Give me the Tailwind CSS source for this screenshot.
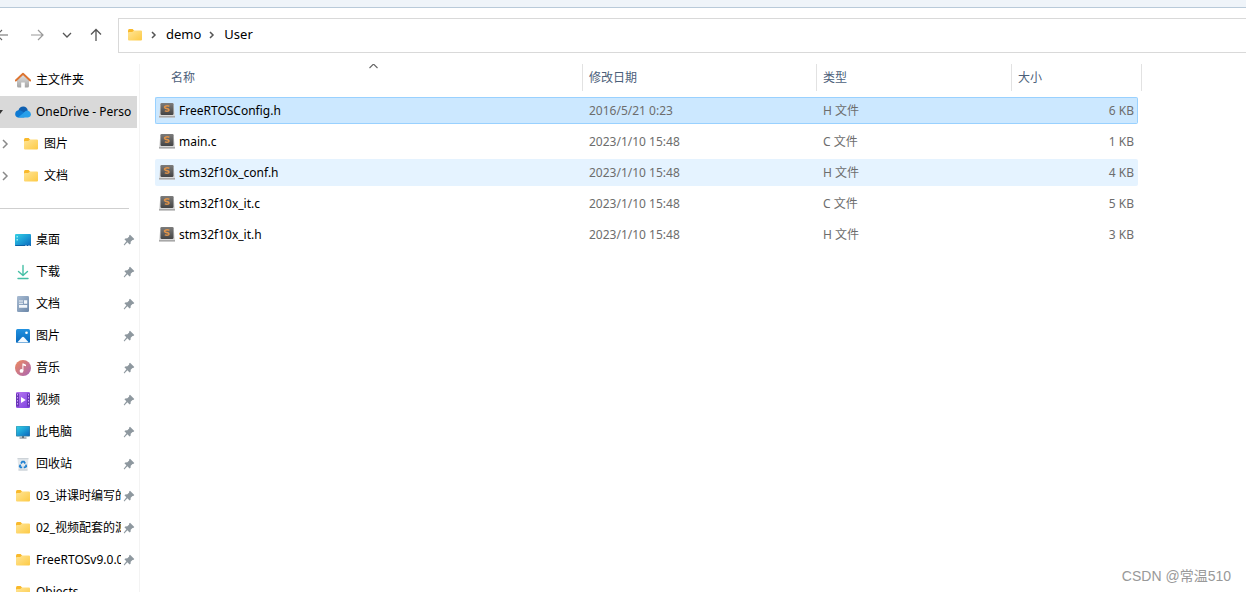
<!DOCTYPE html>
<html lang="zh-CN">
<head>
<meta charset="utf-8">
<meta name="viewport" content="width=device-width, initial-scale=1">
<title>User</title>
<script src="https://cdn.jsdelivr.net/npm/@tailwindcss/browser@4"></script>
</head>
<body class="flex h-screen flex-col overflow-hidden bg-white font-['Noto_Sans','Noto_Sans_CJK_SC',sans-serif] text-xs text-black">
<svg width="0" height="0" class="absolute" aria-hidden="true">
  <defs>
    <linearGradient id="gFolder" x1="0" y1="0" x2="1" y2="1"><stop offset="0" stop-color="#ffe597"/><stop offset="1" stop-color="#fdca45"/></linearGradient>
    <linearGradient id="gDesk" x1="0" y1="0" x2="1" y2="1"><stop offset="0" stop-color="#35d0e4"/><stop offset=".5" stop-color="#1c9ed6"/><stop offset="1" stop-color="#0c66bb"/></linearGradient>
    <linearGradient id="gDoc" x1="0" y1="0" x2="1" y2="1"><stop offset="0" stop-color="#a9bcd3"/><stop offset="1" stop-color="#6b87a8"/></linearGradient>
    <linearGradient id="gPic" x1="0" y1="0" x2="0" y2="1"><stop offset="0" stop-color="#2292e0"/><stop offset="1" stop-color="#0669bd"/></linearGradient>
    <linearGradient id="gMusic" x1="0" y1="0" x2="1" y2="1"><stop offset="0" stop-color="#ef8a5c"/><stop offset="1" stop-color="#a865b5"/></linearGradient>
    <linearGradient id="gVideo" x1="0" y1="0" x2="1" y2="1"><stop offset="0" stop-color="#b877f0"/><stop offset="1" stop-color="#7c3fe0"/></linearGradient>
    <linearGradient id="gHome" x1="0" y1="0" x2="0" y2="1"><stop offset="0" stop-color="#e4e4e4"/><stop offset="1" stop-color="#a4a4a4"/></linearGradient>
    <linearGradient id="gSub" x1="0" y1="0" x2="0" y2="1"><stop offset="0" stop-color="#7c7c7c"/><stop offset="1" stop-color="#444"/></linearGradient>
    <symbol id="folder" viewBox="0 0 16 16"><path d="M1 3.5Q1 2 2.3 2H5.6L7.4 4V6H1z" fill="#f9b92b"/><path d="M1 6Q1 5 2 5H5.2L7 3.5H14Q15 3.5 15 4.500V12.500Q15 13.500 14 13.500H2Q1 13.500 1 12.500z" fill="url(#gFolder)"/></symbol>
    <symbol id="pin" viewBox="0 0 12 12"><path d="M7 .8 11.300 5.100 10.300 6.100 9.500 5.900 7.700 7.700 7.600 9.800 6.600 10.500 4.400 8.300 1.300 11.400.7 10.800 3.400 7.300 1.400 5.300 2.200 4.400 4.400 4.300 6.200 2.500 6 1.700z" fill="#8e989f"/></symbol>
    <symbol id="chev" viewBox="0 0 8 12"><path d="M2 2 6 6 2 10" fill="none" stroke="#8a8a8a" stroke-width="1.500"/></symbol>
    <symbol id="sub" viewBox="0 0 16 16"><path d="M1.500 1h13L16 14v1.500H0V14z" fill="#d9d9d9"/><path d="M0 14h16v1.500H0z" fill="#a8a8a8"/><rect x="1.500" y="1" width="13" height="12" rx="1.200" fill="url(#gSub)"/><path d="M10.400 4.200Q8 3.500 6.300 4.200T6.500 6.300L9.200 7Q10.500 7.800 9.600 8.900 8.200 9.600 5.800 8.900" fill="none" stroke="#e0944a" stroke-width="1.500"/></symbol>
  </defs>
</svg>

<div class="h-2 shrink-0 border-b border-[#b9cad9] bg-[#eff4f9]"></div>

<header class="flex h-[45px] shrink-0 items-end">
  <nav class="flex h-[35px] w-[118px] shrink-0 items-center pb-0.5" aria-label="导航">
    <button aria-label="后退" class="w-[22px]"><svg class="-ml-1" width="14" height="14" viewBox="0 0 14 14" fill="none" stroke="#666" stroke-width="1.200"><path d="M12 7H1M6 2 1 7l5 5"/></svg></button>
    <button aria-label="前进" class="flex w-[30px] justify-center"><svg width="14" height="14" viewBox="0 0 14 14" fill="none" stroke="#999" stroke-width="1.200"><path d="M1 7h12M8 2l5 5-5 5"/></svg></button>
    <button aria-label="最近位置" class="flex w-[30px] justify-center"><svg width="10" height="10" viewBox="0 0 10 10" fill="none" stroke="#555" stroke-width="1.300"><path d="M1 3l4 4 4-4"/></svg></button>
    <button aria-label="上移" class="flex w-7 justify-center"><svg width="14" height="14" viewBox="0 0 14 14" fill="none" stroke="#555" stroke-width="1.300"><path d="M7 13V1.500M2 6.500l5-5 5 5"/></svg></button>
  </nav>
  <div class="flex h-[35px] flex-1 items-center border border-r-0 border-[#d9d9d9] pb-0.5 pl-2 text-[13px]">
    <svg width="16" height="16"><use href="#folder"/></svg>
    <svg class="ml-2" width="6" height="8" viewBox="0 0 6 8" fill="none" stroke="#555" stroke-width="1.500"><path d="M1 1l3 3-3 3"/></svg>
    <a href="#" class="ml-[9px]">demo</a>
    <svg class="ml-2" width="6" height="8" viewBox="0 0 6 8" fill="none" stroke="#555" stroke-width="1.500"><path d="M1 1l3 3-3 3"/></svg>
    <a href="#" class="ml-[9px]">User</a>
  </div>
</header>

<div class="flex min-h-0 flex-1 pt-[11px]">
  <aside class="w-[140px] shrink-0 overflow-hidden border-r border-[#f3f3f3]">
    <ul>
      <li><a href="#" class="flex h-8 items-center gap-[5px] pl-[15px]"><svg width="16" height="16" viewBox="0 0 16 16"><path d="M2 7.500 8 2l6 5.500V14q0 1.500-1.500 1.500h-2.700V10.500H6.200v5H3.500Q2 15.500 2 14z" fill="url(#gHome)"/><path d="M.8 8.500 8 1.700l7.200 6.800" fill="none" stroke="#dd7430" stroke-width="1.900" stroke-linecap="round" stroke-linejoin="round"/></svg>主文件夹</a></li>
      <li class="w-[137px] bg-[#d9d9d9]"><a href="#" class="flex h-8 items-center whitespace-nowrap"><svg class="mr-3 shrink-0" width="3" height="6" viewBox="0 0 3 6"><path d="M0 1h3L0 5z" fill="#333"/></svg><svg class="mr-[5px] shrink-0" width="16" height="16" viewBox="0 0 16 16"><path d="M3.300 6.700Q4.600 2.700 8.300 2.600 11.700 2.700 12.900 6.400L8 9.500z" fill="#0f5fb0"/><path d="M.2 10.500Q-.1 7 3.300 6.200 5.200 6 7 7.300L12.500 10.500 9 13.400H3.300Q.5 13.200.2 10.500z" fill="#0e7ad3"/><path d="M3 13.400 9 8.500Q10.500 6.200 13 6.400 15.800 7.300 16 10.200 15.800 13 13 13.400z" fill="#279fea"/></svg>OneDrive - Perso</a></li>
      <li><a href="#" class="flex h-8 items-center pl-px"><svg class="mr-3.5" width="8" height="12"><use href="#chev"/></svg><svg class="mr-[5px]" width="16" height="16"><use href="#folder"/></svg>图片</a></li>
      <li><a href="#" class="flex h-8 items-center pl-px"><svg class="mr-3.5" width="8" height="12"><use href="#chev"/></svg><svg class="mr-[5px]" width="16" height="16"><use href="#folder"/></svg>文档</a></li>
    </ul>
    <hr class="mt-4 mb-[15px] mr-2.5 border-[#cfcfcf]">
    <ul>
      <li><a href="#" class="flex h-8 items-center gap-[5px] pl-[15px] pr-1"><svg class="shrink-0" width="16" height="16" viewBox="0 0 16 16"><rect y="2" width="16" height="12" rx="1" fill="url(#gDesk)"/><path d="M1.500 4h1.500v1.500H1.500zM1.500 7h1.500v1.500H1.500z" fill="#8cecf6"/><path d="M0 13h16q0 1-1 1H1q-1 0-1-1z" fill="#0b5fa4"/><path d="M10 13h2v.7h-2zM13 13h2v.7h-2z" fill="#9bd"/></svg><span class="w-[85px] overflow-hidden whitespace-nowrap">桌面</span><svg class="-ml-[3px] shrink-0" width="12" height="12"><use href="#pin"/></svg></a></li>
      <li><a href="#" class="flex h-8 items-center gap-[5px] pl-[15px] pr-1"><svg class="shrink-0" width="16" height="16" viewBox="0 0 16 16" fill="none" stroke="#45bfa5" stroke-width="1.400" stroke-linecap="round" stroke-linejoin="round"><path d="M8 1.500V11M3.500 7.500 8 11.500l4.500-4M3 14.500h10"/></svg><span class="w-[85px] overflow-hidden whitespace-nowrap">下载</span><svg class="-ml-[3px] shrink-0" width="12" height="12"><use href="#pin"/></svg></a></li>
      <li><a href="#" class="flex h-8 items-center gap-[5px] pl-[15px] pr-1"><svg class="shrink-0" width="16" height="16" viewBox="0 0 16 16"><rect x="2" y="0" width="12" height="16" rx="1.200" fill="url(#gDoc)"/><path d="M4 4.500h4v1H4zM4 6.700h4v1H4zM9 4.300h3.200v3.400H9zM4 9h8.200v2.700H4z" fill="#f2f6fa"/></svg><span class="w-[85px] overflow-hidden whitespace-nowrap">文档</span><svg class="-ml-[3px] shrink-0" width="12" height="12"><use href="#pin"/></svg></a></li>
      <li><a href="#" class="flex h-8 items-center gap-[5px] pl-[15px] pr-1"><svg class="shrink-0" width="16" height="16" viewBox="0 0 16 16"><rect x="1" y="1" width="14" height="14" rx="1.500" fill="url(#gPic)"/><path d="M2.200 14.500 7 9.300Q8 8.400 9 9.300L13.800 14.500z" fill="#f4faff"/><circle cx="11.500" cy="4.700" r="1.300" fill="#fff"/></svg><span class="w-[85px] overflow-hidden whitespace-nowrap">图片</span><svg class="-ml-[3px] shrink-0" width="12" height="12"><use href="#pin"/></svg></a></li>
      <li><a href="#" class="flex h-8 items-center gap-[5px] pl-[15px] pr-1"><svg class="shrink-0" width="16" height="16" viewBox="0 0 16 16"><circle cx="8" cy="8" r="8" fill="url(#gMusic)"/><circle cx="6.500" cy="10.900" r="1.900" fill="#fff"/><path d="M7.400 3.500h1.100L11 4.700v1.600L8.400 5.500v5.400h-1z" fill="#fff"/></svg><span class="w-[85px] overflow-hidden whitespace-nowrap">音乐</span><svg class="-ml-[3px] shrink-0" width="12" height="12"><use href="#pin"/></svg></a></li>
      <li><a href="#" class="flex h-8 items-center gap-[5px] pl-[15px] pr-1"><svg class="shrink-0" width="16" height="16" viewBox="0 0 16 16"><rect x="1" y="0" width="14" height="16" rx="1.300" fill="url(#gVideo)"/><path d="M1 1.500h3v13H1zM12 1.500h3v13h-3z" fill="#6a36b8"/><path d="M2 2h1v1.500H2zM2 5h1v1.500H2zM2 8h1v1.500H2zM2 11h1v1.500H2zM13 2h1v1.500h-1zM13 5h1v1.500h-1zM13 8h1v1.500h-1zM13 11h1v1.500h-1z" fill="#c9a1f5"/><path d="M6 5l4.800 3L6 11z" fill="#fff"/></svg><span class="w-[85px] overflow-hidden whitespace-nowrap">视频</span><svg class="-ml-[3px] shrink-0" width="12" height="12"><use href="#pin"/></svg></a></li>
      <li><a href="#" class="flex h-8 items-center gap-[5px] pl-[15px] pr-1"><svg class="shrink-0" width="16" height="16" viewBox="0 0 16 16"><path d="M7 12h2v1.500h2.500v1h-7v-1H7z" fill="#66727c"/><rect x="1" y="2" width="14" height="10.500" rx=".8" fill="#3f7f9c"/><rect x="1.500" y="2.300" width="13" height="9.500" fill="url(#gDesk)"/></svg><span class="w-[85px] overflow-hidden whitespace-nowrap">此电脑</span><svg class="-ml-[3px] shrink-0" width="12" height="12"><use href="#pin"/></svg></a></li>
      <li><a href="#" class="flex h-8 items-center gap-[5px] pl-[15px] pr-1"><svg class="shrink-0" width="16" height="16" viewBox="0 0 16 16"><path d="M2.500 2h11l-1 12.500h-9z" fill="#e3e8ec"/><path d="M2.500 2h11l-.2 1.200H2.700z" fill="#cdd3d8"/><path d="M3.500 13.500h9v1h-9z" fill="#c3cad0"/><path d="M6 7.500 7.200 5.700H9L10.200 7.500M10.900 8.700 11.200 10.600 9.600 11.300H8.700M7.200 11.300H5.400L4.700 10.300 5.600 8.600" fill="none" stroke="#1f80d0" stroke-width="1.700"/></svg><span class="w-[85px] overflow-hidden whitespace-nowrap">回收站</span><svg class="-ml-[3px] shrink-0" width="12" height="12"><use href="#pin"/></svg></a></li>
      <li><a href="#" class="flex h-8 items-center gap-[5px] pl-[15px] pr-1"><svg class="shrink-0" width="16" height="16"><use href="#folder"/></svg><span class="w-[85px] overflow-hidden whitespace-nowrap">03_讲课时编写的</span><svg class="-ml-[3px] shrink-0" width="12" height="12"><use href="#pin"/></svg></a></li>
      <li><a href="#" class="flex h-8 items-center gap-[5px] pl-[15px] pr-1"><svg class="shrink-0" width="16" height="16"><use href="#folder"/></svg><span class="w-[85px] overflow-hidden whitespace-nowrap">02_视频配套的源</span><svg class="-ml-[3px] shrink-0" width="12" height="12"><use href="#pin"/></svg></a></li>
      <li><a href="#" class="flex h-8 items-center gap-[5px] pl-[15px] pr-1"><svg class="shrink-0" width="16" height="16"><use href="#folder"/></svg><span class="w-[85px] overflow-hidden whitespace-nowrap">FreeRTOSv9.0.0</span><svg class="-ml-[3px] shrink-0" width="12" height="12"><use href="#pin"/></svg></a></li>
      <li><a href="#" class="flex h-8 items-center gap-[5px] pl-[15px] pr-1"><svg class="shrink-0" width="16" height="16"><use href="#folder"/></svg><span class="w-[85px] overflow-hidden whitespace-nowrap">Objects</span></a></li>
    </ul>
  </aside>

  <main class="relative min-w-0 flex-1 overflow-hidden pl-[15px]">
    <table class="-mt-[5px] w-[987px] table-fixed border-separate border-spacing-x-0 border-spacing-y-1 text-[#6d6d6d]">
      <colgroup><col class="w-[428px]"><col class="w-[234px]"><col class="w-[195px]"><col class="w-[126px]"><col class="w-1"></colgroup>
      <thead class="text-left text-[#4c607a]">
        <tr class="h-[30px] align-top">
          <th scope="col" class="p-0 font-normal" aria-sort="ascending"><button class="relative flex h-7 w-full items-center border-r border-[#e2e2e2] pl-4 pt-0.5">名称<svg class="absolute left-[214px] top-0" width="9" height="6" viewBox="0 0 9 6" fill="none" stroke="#666" stroke-width="1.100"><path d="M.5 5l4-4 4 4"/></svg></button></th>
          <th scope="col" class="p-0 font-normal"><button class="flex h-7 w-full items-center border-r border-[#e2e2e2] pl-1.5 pt-0.5">修改日期</button></th>
          <th scope="col" class="p-0 font-normal"><button class="flex h-7 w-full items-center border-r border-[#e2e2e2] pl-1.5 pt-0.5">类型</button></th>
          <th scope="col" colspan="2" class="p-0 font-normal"><button class="flex h-7 w-full items-center border-r border-[#e2e2e2] pl-1.5 pt-0.5">大小</button></th>
        </tr>
      </thead>
      <tbody>
        <tr class="h-[27px]">
          <td class="rounded-l-xs border-y border-l border-[#99d1ff] bg-[#cce8ff] p-0 pl-[3px] text-black"><div class="flex items-center gap-1"><svg class="-mt-0.5" width="16" height="16"><use href="#sub"/></svg>FreeRTOSConfig.h</div></td>
          <td class="border-y border-[#99d1ff] bg-[#cce8ff] p-0 pl-1.5">2016/5/21 0:23</td>
          <td class="border-y border-[#99d1ff] bg-[#cce8ff] p-0 pl-1.5">H 文件</td>
          <td class="rounded-r-xs border-y border-r border-[#99d1ff] bg-[#cce8ff] p-0 pr-[3px] text-right">6 KB</td>
        </tr>
        <tr class="h-[27px]">
          <td class="p-0 pl-1 text-black"><div class="flex items-center gap-1"><svg class="-mt-0.5" width="16" height="16"><use href="#sub"/></svg>main.c</div></td>
          <td class="p-0 pl-1.5">2023/1/10 15:48</td>
          <td class="p-0 pl-1.5">C 文件</td>
          <td class="p-0 pr-1 text-right">1 KB</td>
        </tr>
        <tr class="h-[27px]">
          <td class="rounded-l-xs bg-[#e5f3ff] p-0 pl-1 text-black"><div class="flex items-center gap-1"><svg class="-mt-0.5" width="16" height="16"><use href="#sub"/></svg>stm32f10x_conf.h</div></td>
          <td class="bg-[#e5f3ff] p-0 pl-1.5">2023/1/10 15:48</td>
          <td class="bg-[#e5f3ff] p-0 pl-1.5">H 文件</td>
          <td class="rounded-r-xs bg-[#e5f3ff] p-0 pr-1 text-right">4 KB</td>
        </tr>
        <tr class="h-[27px]">
          <td class="p-0 pl-1 text-black"><div class="flex items-center gap-1"><svg class="-mt-0.5" width="16" height="16"><use href="#sub"/></svg>stm32f10x_it.c</div></td>
          <td class="p-0 pl-1.5">2023/1/10 15:48</td>
          <td class="p-0 pl-1.5">C 文件</td>
          <td class="p-0 pr-1 text-right">5 KB</td>
        </tr>
        <tr class="h-[27px]">
          <td class="p-0 pl-1 text-black"><div class="flex items-center gap-1"><svg class="-mt-0.5" width="16" height="16"><use href="#sub"/></svg>stm32f10x_it.h</div></td>
          <td class="p-0 pl-1.5">2023/1/10 15:48</td>
          <td class="p-0 pl-1.5">H 文件</td>
          <td class="p-0 pr-1 text-right">3 KB</td>
        </tr>
      </tbody>
    </table>
    <p class="absolute bottom-1.5 right-[15px] font-['Liberation_Sans','Noto_Sans_CJK_SC',sans-serif] text-sm text-[#999]">CSDN @常温510</p>
  </main>
</div>
</body>
</html>
